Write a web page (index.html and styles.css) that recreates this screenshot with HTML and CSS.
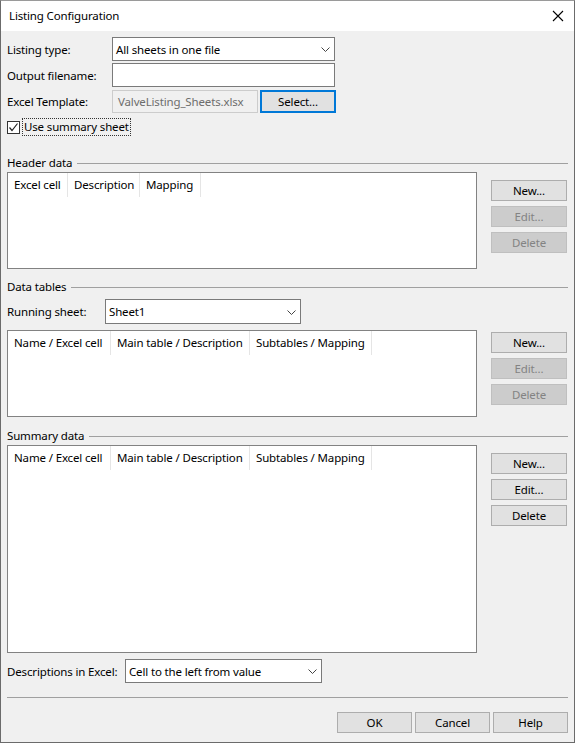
FILE: index.html
```html
<!DOCTYPE html>
<html>
<head>
<meta charset="utf-8">
<link rel="stylesheet" href="styles.css">
</head>
<body>
<div class="window">
  <div class="titlebar">
    <span class="title">Listing Configuration</span>
    <svg class="close" width="12" height="12" viewBox="0 0 12 12"><path d="M1 1 L11 11 M11 1 L1 11" stroke="#000" stroke-width="1.1" fill="none"/></svg>
  </div>
  <div class="client">
    <div class="form">
      <div class="frow r1">
        <span class="lbl">Listing type:</span>
        <div class="combo w223"><span>All sheets in one file</span><svg class="chev" width="9" height="5" viewBox="0 0 9 5"><polyline points="0.5,0.5 4.5,4.5 8.5,0.5" fill="none" stroke="#444" stroke-width="1"/></svg></div>
      </div>
      <div class="frow r2">
        <span class="lbl">Output filename:</span>
        <div class="tbox w223"></div>
      </div>
      <div class="frow r3">
        <span class="lbl">Excel Template:</span>
        <div class="tbox disabled w146"><span>ValveListing_Sheets.xlsx</span></div>
        <div class="btn focus selbtn">Select...</div>
      </div>
      <div class="chkrow">
        <span class="chk"><svg width="11" height="11" viewBox="0 0 11 11"><polyline points="1.5,5.5 4,8.5 9.5,1.5" fill="none" stroke="#222" stroke-width="1.2"/></svg></span>
        <span class="chklbl">Use summary sheet</span>
      </div>
    </div>

    <div class="group g1"><span>Header data</span><div class="gline"></div></div>
    <div class="sect">
      <div class="list h97">
        <div class="lhead">
          <div class="col" style="width:60px">Excel cell</div>
          <div class="col" style="width:72px">Description</div>
          <div class="col" style="width:61px">Mapping</div>
        </div>
      </div>
      <div class="btncol off8">
        <div class="btn">New...</div>
        <div class="btn dis">Edit...</div>
        <div class="btn dis">Delete</div>
      </div>
    </div>

    <div class="group g2"><span>Data tables</span><div class="gline"></div></div>
    <div class="runrow">
      <span class="lbl2">Running sheet:</span>
      <div class="combo w196 h25"><span>Sheet1</span><svg class="chev" width="9" height="5" viewBox="0 0 9 5"><polyline points="0.5,0.5 4.5,4.5 8.5,0.5" fill="none" stroke="#444" stroke-width="1"/></svg></div>
    </div>
    <div class="sect s2">
      <div class="list h87">
        <div class="lhead">
          <div class="col" style="width:103px">Name / Excel cell</div>
          <div class="col" style="width:139px">Main table / Description</div>
          <div class="col" style="width:122px">Subtables / Mapping</div>
        </div>
      </div>
      <div class="btncol off2">
        <div class="btn">New...</div>
        <div class="btn dis">Edit...</div>
        <div class="btn dis">Delete</div>
      </div>
    </div>

    <div class="group g3"><span>Summary data</span><div class="gline"></div></div>
    <div class="sect">
      <div class="list h208">
        <div class="lhead">
          <div class="col" style="width:103px">Name / Excel cell</div>
          <div class="col" style="width:139px">Main table / Description</div>
          <div class="col" style="width:122px">Subtables / Mapping</div>
        </div>
      </div>
      <div class="btncol off8">
        <div class="btn">New...</div>
        <div class="btn">Edit...</div>
        <div class="btn">Delete</div>
      </div>
    </div>

    <div class="descrow">
      <span class="lbl3">Descriptions in Excel:</span>
      <div class="combo w197"><span>Cell to the left from value</span><svg class="chev" width="9" height="5" viewBox="0 0 9 5"><polyline points="0.5,0.5 4.5,4.5 8.5,0.5" fill="none" stroke="#444" stroke-width="1"/></svg></div>
    </div>
    <div class="sep"></div>
    <div class="footer">
      <div class="btn fbtn">OK</div>
      <div class="btn fbtn">Cancel</div>
      <div class="btn fbtn">Help</div>
    </div>
  </div>
</div>
</body>
</html>
```
FILE: styles.css
```css
html, body {
  margin: 0;
  padding: 0;
  background: #f0f0f0;
}
body {
  font-family: "Segoe UI", "Noto Sans", "Open Sans", sans-serif;
  font-size: 11.5px;
  letter-spacing: -0.15px;
  color: #000;
}
.window {
  width: 575px;
  height: 743px;
  box-sizing: border-box;
  border: 1px solid #6b6b6b;
  border-top: 1px solid #9a9a9a;
  background: #f0f0f0;
  display: flex;
  flex-direction: column;
}
.titlebar {
  height: 30px;
  background: #fff;
  display: flex;
  align-items: center;
  justify-content: space-between;
  padding: 0 10px 0 8px;
  flex: none;
}
.title {
  margin-top: -1px;
}
.close {
  margin-top: -1px;
}
.client {
  padding: 0 6px 0 6px;
  display: flex;
  flex-direction: column;
}
.form {
  display: flex;
  flex-direction: column;
}
.frow {
  display: flex;
  align-items: center;
}
.r1 { margin-top: 6px; height: 24px; }
.r2 { margin-top: 2px; height: 24px; }
.r3 { margin-top: 3px; height: 23px; }
.lbl, .lbl2, .lbl3 {
  white-space: nowrap;
  flex: none;
}
.lbl { width: 105px; }
.combo, .tbox {
  box-sizing: border-box;
  height: 100%;
  border: 1px solid #7a7a7a;
  background: #fff;
  display: flex;
  align-items: center;
  justify-content: space-between;
  padding: 0 4px 0 3px;
}
.combo span, .tbox span {
  white-space: nowrap;
}
.chev { flex: none; margin-top: 1px; }
.w223 { width: 223px; }
.w146 { width: 146px; }
.w196 { width: 196px; }
.w197 { width: 197px; }
.h25 { height: 25px; }
.tbox.disabled {
  border-color: #cccccc;
  background: #f0f0f0;
  color: #6d6d6d;
  padding-left: 5px;
}
.btn {
  box-sizing: border-box;
  border: 1px solid #adadad;
  background: #e1e1e1;
  display: flex;
  align-items: center;
  justify-content: center;
  height: 21px;
}
.btn.dis {
  background: #cccccc;
  border-color: #bfbfbf;
  color: #838383;
}
.btn.focus {
  border: 2px solid #0078d7;
}
.selbtn {
  width: 76px;
  height: 23px;
  margin-left: 2px;
}
.chkrow {
  margin-top: 5px;
  height: 18px;
  display: flex;
  align-items: center;
}
.chk {
  box-sizing: border-box;
  width: 13px;
  height: 13px;
  border: 1px solid #333;
  background: #fff;
  display: flex;
  align-items: center;
  justify-content: center;
}
.chklbl {
  margin-left: 2px;
  padding: 0 1px 0 1px;
  height: 18px;
  line-height: 16px;
  box-sizing: border-box;
  border: 1px dotted #333;
  white-space: nowrap;
}
.group {
  display: flex;
  align-items: center;
  height: 16px;
}
.group span { white-space: nowrap; margin-right: 5px; }
.gline {
  flex: 1;
  height: 1px;
  background: #a0a0a0;
  margin-top: 2px;
}
.g1 { margin-top: 18px; margin-bottom: 2px; }
.g2 { margin-top: 9px; }
.g3 { margin-top: 10px; margin-bottom: 2px; }
.sect {
  display: flex;
  align-items: flex-start;
}
.list {
  box-sizing: border-box;
  width: 470px;
  border: 1px solid #828282;
  background: #fff;
  flex: none;
}
.h97 { height: 97px; }
.h87 { height: 87px; }
.h208 { height: 208px; }
.lhead {
  display: flex;
  height: 24px;
}
.col {
  box-sizing: border-box;
  border-right: 1px solid #e5e5e5;
  padding-left: 6px;
  display: flex;
  align-items: center;
  white-space: nowrap;
  padding-bottom: 1px;
}
.btncol {
  margin-left: 14px;
  width: 76px;
  display: flex;
  flex-direction: column;
  gap: 5px;
}
.off8 { margin-top: 8px; }
.off2 { margin-top: 2px; }
.runrow {
  margin-top: 5px;
  height: 25px;
  display: flex;
  align-items: center;
}
.lbl2 { width: 98px; }
.s2 { margin-top: 6px; }
.descrow {
  margin-top: 6px;
  height: 24px;
  display: flex;
  align-items: center;
}
.lbl3 { width: 118px; }
.sep {
  margin-top: 14px;
  height: 1px;
  background: #a0a0a0;
}
.footer {
  margin-top: 14px;
  display: flex;
  justify-content: flex-end;
  gap: 3px;
}
.fbtn {
  width: 75px;
}
```
